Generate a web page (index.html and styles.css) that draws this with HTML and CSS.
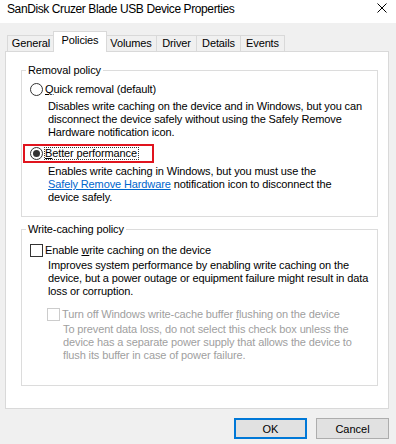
FILE: index.html
```html
<!DOCTYPE html>
<html lang="en">
<head>
    <meta charset="UTF-8">
    <title>SanDisk Cruzer Blade USB Device Properties</title>
    <link rel="stylesheet" href="styles.css">
</head>
<body>

    <!-- Title bar -->
    <div class="titlebar">
        <span class="title">SanDisk Cruzer Blade USB Device Properties</span>
        <svg class="close" width="10" height="10" viewBox="0 0 10 10">
            <path d="M0.5 0.5 L9.5 9.5 M9.5 0.5 L0.5 9.5" stroke="#000" stroke-width="1" fill="none"/>
        </svg>
    </div>

    <!-- Tabs -->
    <div class="tabs">
        <div class="tab tab-general">General</div>
        <div class="tab tab-policies active">Policies</div>
        <div class="tab tab-volumes">Volumes</div>
        <div class="tab tab-driver">Driver</div>
        <div class="tab tab-details">Details</div>
        <div class="tab tab-events">Events</div>
    </div>

    <div class="page">
        <fieldset class="group group-removal">
            <legend>Removal policy</legend>

            <div class="option first">
                <span class="radio"></span>
                <span class="label"><u>Q</u>uick removal (default)</span>
            </div>
            <p class="desc">Disables write caching on the device and in Windows, but you can<br>disconnect the device safely without using the Safely Remove<br>Hardware notification icon.</p>

            <div class="highlight">
                <div class="option">
                    <span class="radio checked"></span>
                    <span class="label focus"><u>B</u>etter performance</span>
                </div>
            </div>
            <p class="desc desc-tight">Enables write caching in Windows, but you must use the<br><a href="#" class="link">Safely Remove Hardware</a> notification icon to disconnect the<br>device safely.</p>
        </fieldset>

        <fieldset class="group group-caching">
            <legend>Write-caching policy</legend>

            <div class="option first">
                <span class="check"></span>
                <span class="label">Enable <u>w</u>rite caching on the device</span>
            </div>
            <p class="desc">Improves system performance by enabling write caching on the<br>device, but a power outage or equipment failure might result in data<br>loss or corruption.</p>

            <div class="option sub disabled">
                <span class="check"></span>
                <span class="label">Turn off Windows write-cache buffer <u>f</u>lushing on the device</span>
            </div>
            <p class="desc sub-desc disabled">To prevent data loss, do not select this check box unless the<br>device has a separate power supply that allows the device to<br>flush its buffer in case of power failure.</p>
        </fieldset>
    </div>

    <div class="buttons">
        <button class="btn default">OK</button>
        <button class="btn">Cancel</button>
    </div>

</body>
</html>
```

FILE: styles.css
```css
body {
    margin: 0;
    width: 396px;
    height: 444px;
    background-color: #f0f0f0;
    font-family: 'Liberation Sans', Arial, sans-serif;
    font-size: 11px;
    line-height: 13px;
    letter-spacing: -0.12px;
    color: #000;
    overflow: hidden;
}

.titlebar {
    height: 23px;
    background-color: #fff;
    display: flex;
    align-items: flex-start;
    justify-content: space-between;
    padding: 0 9px 0 7px;
}

.title {
    font-size: 12px;
    line-height: 16px;
    letter-spacing: -0.4px;
    margin-top: 1px;
}

.close {
    margin-top: 3px;
}

.tabs {
    display: flex;
    align-items: flex-end;
    padding: 8px 0 0 7px;
}

.tab {
    box-sizing: border-box;
    height: 16px;
    line-height: 15px;
    text-align: center;
    border: 1px solid #d9d9d9;
    border-bottom: none;
    margin-left: -1px;
    background-color: #f0f0f0;
}

.tab-general { width: 48px; margin-left: 0; }
.tab-volumes { width: 52px; }
.tab-driver { width: 41px; }
.tab-details { width: 45px; }
.tab-events { width: 45px; }

.tab.active {
    width: 54px;
    height: 21px;
    line-height: 17px;
    margin-left: -2px;
    margin-bottom: -1px;
    margin-right: -1px;
    background-color: #fff;
    position: relative;
    z-index: 1;
}

.page {
    box-sizing: border-box;
    height: 358px;
    margin: 0 7px 0 5px;
    background-color: #fff;
    border: 1px solid #d9d9d9;
    padding-top: 12px;
}

.group {
    margin: 0 10px 0 15px;
    padding: 0 0 12px 8px;
    border: 1px solid #dcdcdc;
    min-width: 0;
}

.group legend {
    padding: 0 2px;
    margin-left: -4px;
}

.group-caching {
    margin-top: 6px;
    padding-bottom: 23px;
}

.option {
    display: flex;
    align-items: center;
    height: 13px;
}

.option.first {
    margin-top: 6px;
}

.group-caching .option.first {
    margin-top: 8px;
}

.radio {
    box-sizing: border-box;
    width: 13px;
    height: 13px;
    border: 1px solid #333;
    border-radius: 50%;
    background-color: #fff;
    display: flex;
    align-items: center;
    justify-content: center;
    flex-shrink: 0;
}

.radio.checked::after {
    content: '';
    width: 7px;
    height: 7px;
    border-radius: 50%;
    background-color: #333;
}

.check {
    box-sizing: border-box;
    width: 13px;
    height: 13px;
    border: 1px solid #333;
    background-color: #fff;
    flex-shrink: 0;
}

.label {
    margin-left: 2px;
    white-space: nowrap;
}

.label.focus {
    border: 1px dotted #333;
    margin-left: 1px;
    line-height: 11px;
    padding: 0 1px 0 0;
}

.desc {
    margin: 4px 0 0 18px;
    white-space: nowrap;
}

.desc-tight {
    margin-top: 2px;
}

.group-caching .desc {
    margin-top: 2px;
}

.highlight {
    display: inline-block;
    margin: 5px 0 0 -7px;
    padding: 1px 13px 1px 5px;
    border: 2px solid #e0141e;
}

.link {
    color: #0066cc;
    text-decoration: underline;
}

.option.sub {
    margin: 10px 0 0 17px;
}

.sub-desc {
    margin: 3px 0 0 33px;
}

.disabled {
    color: #a0a0a0;
}

.disabled .check {
    border-color: #cccccc;
}

.buttons {
    display: flex;
    justify-content: flex-end;
    gap: 9px;
    padding: 9px 7px 0 0;
}

.btn {
    box-sizing: border-box;
    width: 73px;
    height: 21px;
    padding: 0;
    font-family: inherit;
    font-size: 11px;
    background-color: #e1e1e1;
    border: 1px solid #adadad;
    color: #000;
}

.btn.default {
    border: 2px solid #0078d7;
}
```
